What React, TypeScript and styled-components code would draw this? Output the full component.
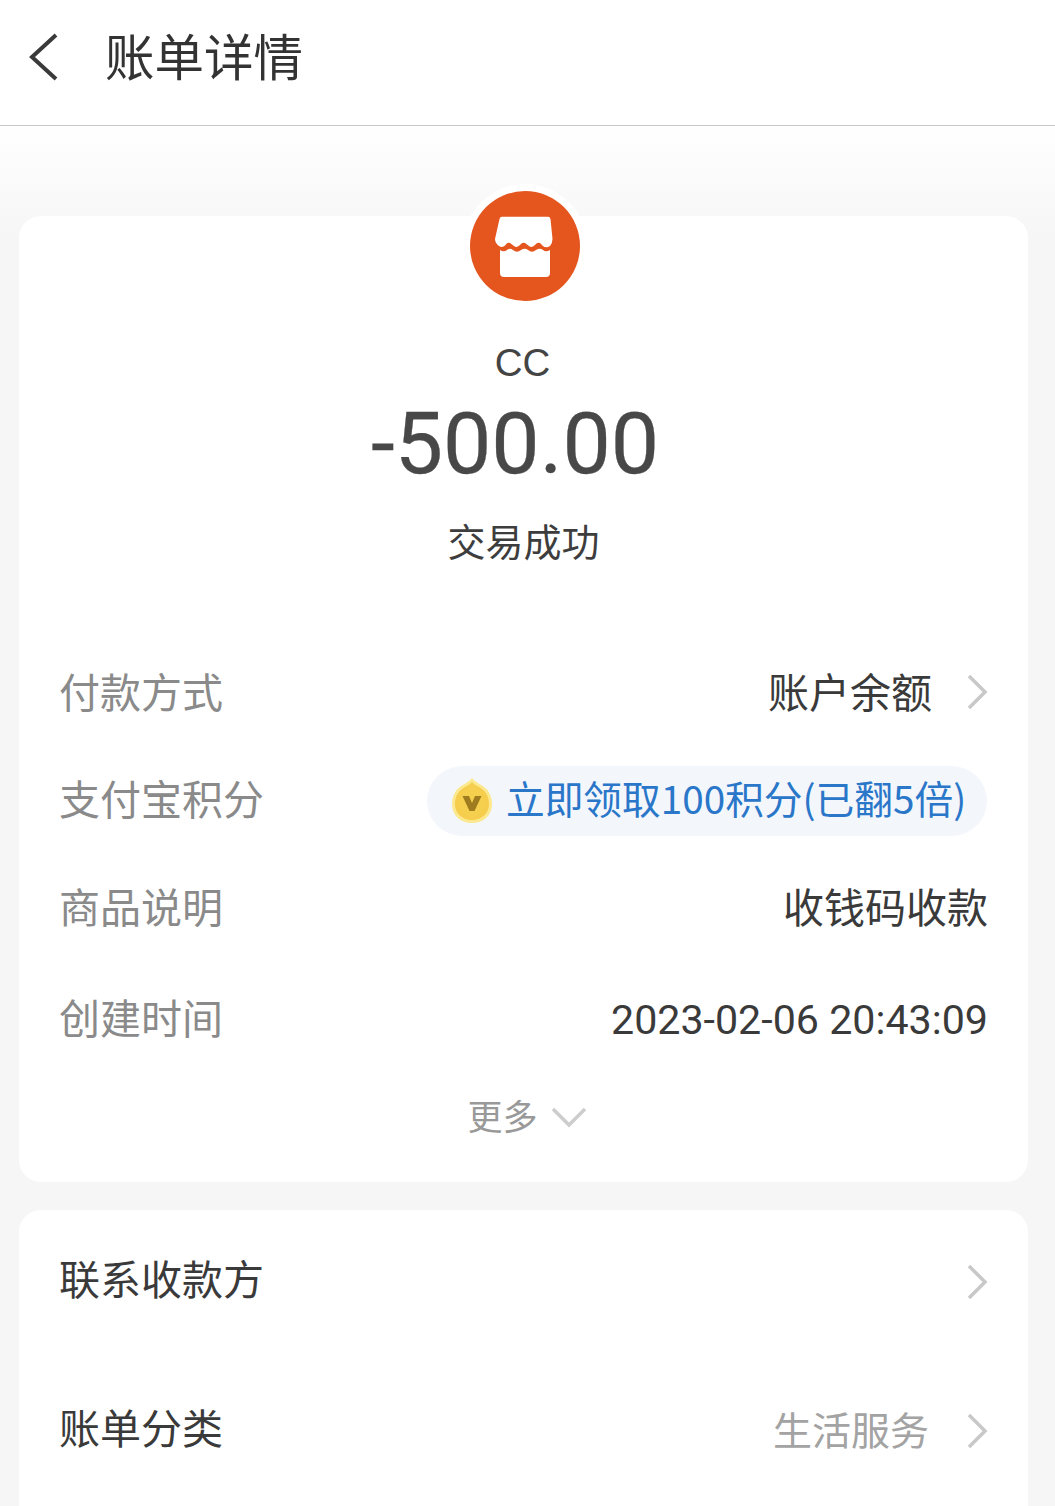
import React from "react";
import styled, { createGlobalStyle } from "styled-components";

const GlobalStyle = createGlobalStyle`
  html, body {
    margin: 0;
    padding: 0;
    background: #f5f5f5;
  }
  body {
    font-family: "Roboto", "Noto Sans CJK SC", sans-serif;
  }
`;

const Page = styled.div`
  width: 1055px;
  height: 1506px;
  overflow: hidden;
  background: linear-gradient(#ffffff 126px, #f6f6f6 240px);
`;

const Header = styled.header`
  height: 125px;
  box-sizing: content-box;
  border-bottom: 1px solid #c9c9c9;
  background: #fff;
  display: flex;
  align-items: center;
  padding-left: 28px;
  gap: 45px;
`;

const Title = styled.h1`
  margin: 0 0 16px;
  font-family: "Noto Sans CJK SC", sans-serif;
  font-size: 49.5px;
  font-weight: 400;
  color: #333;
  line-height: 1;
`;

const BackIcon = styled.svg`
  width: 32px;
  height: 50px;
  flex: none;
  margin-bottom: 12px;
`;

const Card = styled.section<{ $top: number; $height: number }>`
  display: flow-root;
  margin: ${(p) => p.$top}px 27px 0 19px;
  height: ${(p) => p.$height}px;
  background: #fff;
  border-radius: 22px;
  position: relative;
`;

const Avatar = styled.div`
  position: absolute;
  left: 451px;
  top: -25px;
  width: 110px;
  height: 110px;
  border-radius: 50%;
  background: #e5561f;
  box-shadow: 0 0 0 7px #fff;
  display: flex;
  align-items: center;
  justify-content: center;
`;

const Summary = styled.div`
  padding-top: 125px;
  display: flex;
  flex-direction: column;
  align-items: center;
`;

const Name = styled.div`
  font-family: "Liberation Sans", sans-serif;
  font-size: 38.5px;
  line-height: 44px;
  color: #444;
  margin-left: -2px;
`;

const Amount = styled.div`
  font-size: 86px;
  line-height: 96px;
  color: #484848;
  margin: 11px 0 0 -17px;
  -webkit-text-stroke: 0.3px #484848;
`;

const Status = styled.div`
  font-family: "Noto Sans CJK SC", sans-serif;
  font-size: 38px;
  line-height: 50px;
  color: #3d3d3d;
  margin-top: 23px;
`;

const Rows = styled.div<{ $top: number }>`
  margin-top: ${(p) => p.$top}px;
  padding: 0 40px 0 40px;
  display: flex;
  flex-direction: column;
`;

const Row = styled.div<{ $height: number }>`
  height: ${(p) => p.$height}px;
  display: flex;
  align-items: center;
  justify-content: space-between;
  font-family: "Noto Sans CJK SC", sans-serif;
  font-size: 41px;
`;

const Label = styled.span<{ $dark?: boolean }>`
  color: ${(p) => (p.$dark ? "#3a3a3a" : "#8a8a8a")};
  padding-bottom: ${(p) => (p.$dark ? 6 : 0)}px;
`;

const Value = styled.span`
  color: #3a3a3a;
  display: flex;
  align-items: center;
  gap: 34px;
`;

const MutedValue = styled(Value)`
  color: #a3a3a3;
  font-size: 39px;
  gap: 37px;
`;

const MutedText = styled.span`
  padding-bottom: 2px;
`;

const Time = styled.span`
  font-family: "Roboto", sans-serif;
  font-size: 41.2px;
  color: #3a3a3a;
  padding-top: 8px;
`;

const Pill = styled.div`
  height: 70px;
  width: 560px;
  box-sizing: border-box;
  margin: 8px 1px 0 0;
  border-radius: 35px;
  background: #f3f7fc;
  display: flex;
  align-items: center;
  padding-left: 24px;
  gap: 13px;
  color: #2a76c9;
  font-size: 38.7px;
  white-space: nowrap;
`;

const PillText = styled.span`
  padding-bottom: 8px;
`;

const Chevron = styled.svg`
  width: 22px;
  height: 38px;
  flex: none;
  margin-top: 3px;
`;

const More = styled.div`
  margin-top: 17px;
  display: flex;
  justify-content: center;
  align-items: center;
  gap: 13px;
  font-family: "Noto Sans CJK SC", sans-serif;
  font-size: 35px;
  color: #999;
  padding-left: 7px;
`;

const MoreText = styled.span`
  padding-bottom: 4px;
`;

const RightArrow = () => (
  <Chevron viewBox="0 0 22 38" fill="none">
    <path d="M3 3 L19 19 L3 35" stroke="#c8c8c8" strokeWidth="3.5" />
  </Chevron>
);

const Store = () => (
  <svg width="66" height="66" viewBox="0 0 66 66">
    <path
      fill="#fff"
      d="M10 3.7 H56 Q58 3.7 58.5 6 L60.5 26 Q60.5 30 58 33 Q54 35.5 51 33 L48 30 Q45 29 43.5 31.5 Q40 35.5 37 33 L33 30 Q30 29 28.5 31.5 Q25 35.5 22 33 L18 30 Q15 29 14 31.5 Q11 35.5 7 33 Q3 30 3 26 L7.5 6 Q8 3.7 10 3.7 Z"
    />
    <path
      fill="#fff"
      d="M8 37 Q12 39.5 15 37 Q18 34.5 21 37 Q25 40.5 29 37 Q33 34.5 36 37 Q40 40.5 44 37 Q48 34.5 51 37 Q54 39.5 58 37 V60 Q58 64 54 64 H12 Q8 64 8 60 Z"
    />
  </svg>
);

const Coin = () => (
  <svg width="42" height="48" viewBox="0 0 42 48">
    <path d="M21 1 C23 4 27 6 32 9 C38 13 41 20 41 27 C41 39 32 46 21 46 C10 46 1 39 1 27 C1 20 4 13 10 9 C15 6 19 4 21 1 Z" fill="#fbe88f" />
    <path d="M21 5 C23 8 27 9 31 12 C36 16 38 21 38 27 C38 37 30 43 21 43 C12 43 4 37 4 27 C4 21 6 16 11 12 C15 9 19 8 21 5 Z" fill="#f6cd4c" />
    <path d="M21 9 C24 11 27 13 29 15 C33 18 34 22 34 27 C34 35 28 40 21 40 C14 40 8 35 8 27 C8 22 9 18 13 15 C15 13 18 11 21 9 Z" fill="#f5d04e" />
    <path d="M11.5 19 H18 L21 26 L24 19 H30.5 L23.5 34 H18.5 Z" fill="#a07c20" />
  </svg>
);

export default function App() {
  return (
    <Page>
      <GlobalStyle />
      <Header>
        <BackIcon viewBox="0 0 32 50" fill="none">
          <path d="M28 3 L4 25 L28 47" stroke="#3a3a3a" strokeWidth="4" />
        </BackIcon>
        <Title>账单详情</Title>
      </Header>

      <Card $top={90} $height={966}>
        <Avatar>
          <Store />
        </Avatar>
        <Summary>
          <Name>CC</Name>
          <Amount>-500.00</Amount>
          <Status>交易成功</Status>
        </Summary>
        <Rows $top={72}>
          <Row $height={106}>
            <Label>付款方式</Label>
            <Value>
              账户余额
              <RightArrow />
            </Value>
          </Row>
          <Row $height={108}>
            <Label>支付宝积分</Label>
            <Pill>
              <Coin />
              <PillText>立即领取100积分(已翻5倍)</PillText>
            </Pill>
          </Row>
          <Row $height={108}>
            <Label>商品说明</Label>
            <Value>收钱码收款</Value>
          </Row>
          <Row $height={113}>
            <Label>创建时间</Label>
            <Time>2023-02-06 20:43:09</Time>
          </Row>
        </Rows>
        <More>
          <MoreText>更多</MoreText>
          <svg width="36" height="22" viewBox="0 0 36 22" fill="none">
            <path d="M2 3 L18 19 L34 3" stroke="#cdcdcd" strokeWidth="3.5" />
          </svg>
        </More>
      </Card>

      <Card $top={28} $height={340}>
        <Rows $top={-1}>
          <Row $height={142}>
            <Label $dark>联系收款方</Label>
            <RightArrow />
          </Row>
          <Row $height={156}>
            <Label $dark>账单分类</Label>
            <MutedValue>
              <MutedText>生活服务</MutedText>
              <RightArrow />
            </MutedValue>
          </Row>
        </Rows>
      </Card>
    </Page>
  );
}
